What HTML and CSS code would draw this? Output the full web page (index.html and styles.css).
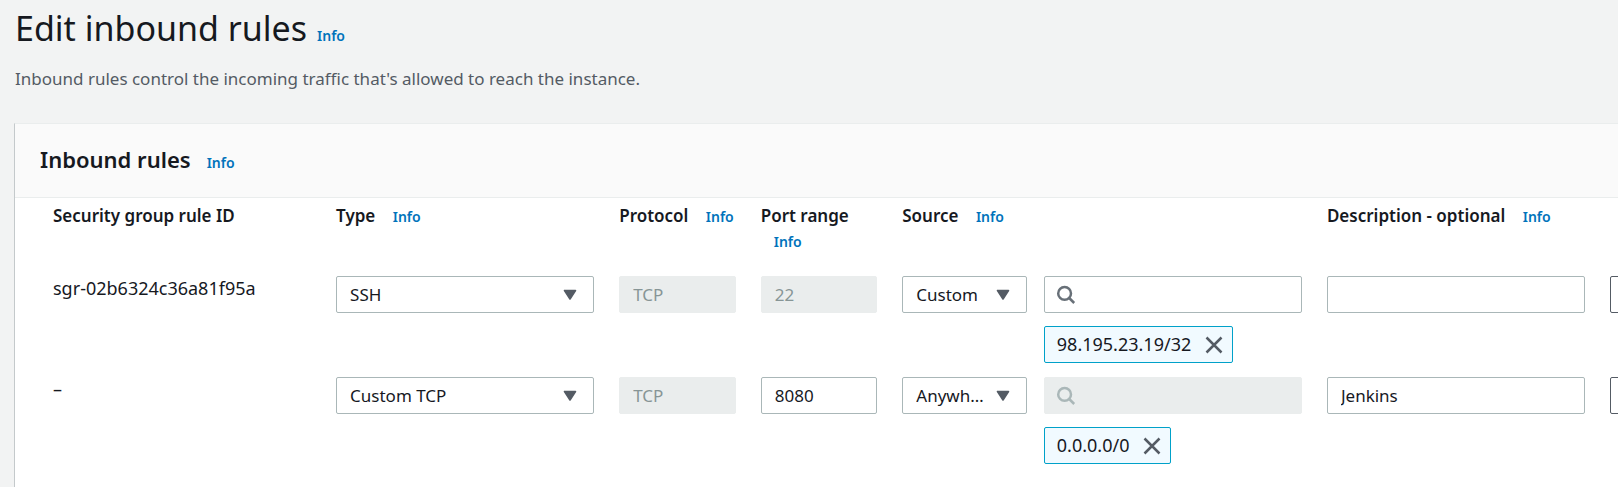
FILE: index.html
```html
<!DOCTYPE html>
<html lang="en">
<head>
<meta charset="utf-8">
<title>Edit inbound rules</title>
<link rel="stylesheet" href="styles.css">
</head>
<body>
<svg class="sprite" aria-hidden="true">
  <symbol id="caret" viewBox="0 0 14 12"><path d="M1.5 1.5h11L7 10z" fill="currentColor" stroke="currentColor" stroke-width="1.6" stroke-linejoin="round"/></symbol>
  <symbol id="search" viewBox="0 0 20 20"><circle cx="8.6" cy="8.4" r="6.4" fill="none" stroke="currentColor" stroke-width="2.5"/><path d="M13.2 13l5 5" fill="none" stroke="currentColor" stroke-width="2.5"/></symbol>
  <symbol id="close" viewBox="0 0 18 18"><path d="M1.5 1.5l15 15M16.5 1.5l-15 15" fill="none" stroke="currentColor" stroke-width="2.5"/></symbol>
</svg>
<main class="page">
  <header class="page-header">
    <div class="title-row">
      <h1 class="page-title">Edit inbound rules</h1>
      <a class="info" href="#">Info</a>
    </div>
    <p class="page-description">Inbound rules control the incoming traffic that's allowed to reach the instance.</p>
  </header>
  <section class="panel">
    <div class="panel-header">
      <h2 class="panel-title">Inbound rules</h2>
      <a class="info" href="#">Info</a>
    </div>
    <table class="rules">
      <thead>
        <tr class="row row-head">
          <th class="span-2" scope="col">Security group rule ID</th>
          <th class="span-2" scope="col">Type <a class="info" href="#">Info</a></th>
          <th scope="col">Protocol <a class="info" href="#">Info</a></th>
          <th scope="col">Port range <a class="info" href="#">Info</a></th>
          <th class="span-3" scope="col">Source <a class="info" href="#">Info</a></th>
          <th class="span-2" scope="col">Description - optional <a class="info" href="#">Info</a></th>
        </tr>
      </thead>
      <tbody>
        <tr class="row">
          <td class="span-2 rule-id">sgr-02b6324c36a81f95a</td>
          <td class="span-2"><div class="field"><select class="control" aria-label="Type"><option>SSH</option></select><svg class="caret" aria-hidden="true"><use href="#caret"/></svg></div></td>
          <td><input class="control" type="text" value="TCP" aria-label="Protocol" disabled></td>
          <td><input class="control" type="text" value="22" aria-label="Port range" disabled></td>
          <td class="source"><div class="field"><select class="control" aria-label="Source type"><option>Custom</option></select><svg class="caret" aria-hidden="true"><use href="#caret"/></svg></div></td>
          <td class="span-2">
            <div class="field"><input class="control control-search" type="text" aria-label="Source"><svg class="search" aria-hidden="true"><use href="#search"/></svg></div>
            <div class="token"><span>98.195.23.19/32</span><button class="token-remove" type="button" aria-label="Remove 98.195.23.19/32"><svg aria-hidden="true"><use href="#close"/></svg></button></div>
          </td>
          <td class="span-2"><input class="control" type="text" aria-label="Description"></td>
          <td><button class="delete" type="button" aria-label="Delete rule"></button></td>
        </tr>
        <tr class="row">
          <td class="span-2 rule-id">–</td>
          <td class="span-2"><div class="field"><select class="control" aria-label="Type"><option>Custom TCP</option></select><svg class="caret" aria-hidden="true"><use href="#caret"/></svg></div></td>
          <td><input class="control" type="text" value="TCP" aria-label="Protocol" disabled></td>
          <td><input class="control" type="text" value="8080" aria-label="Port range"></td>
          <td class="source"><div class="field"><select class="control" aria-label="Source type"><option>Anywh…</option></select><svg class="caret" aria-hidden="true"><use href="#caret"/></svg></div></td>
          <td class="span-2">
            <div class="field"><input class="control control-search" type="text" aria-label="Source" disabled><svg class="search" aria-hidden="true"><use href="#search"/></svg></div>
            <div class="token"><span>0.0.0.0/0</span><button class="token-remove" type="button" aria-label="Remove 0.0.0.0/0"><svg aria-hidden="true"><use href="#close"/></svg></button></div>
          </td>
          <td class="span-2"><input class="control" type="text" value="Jenkins" aria-label="Description"></td>
          <td><button class="delete" type="button" aria-label="Delete rule"></button></td>
        </tr>
      </tbody>
    </table>
  </section>
</main>
</body>
</html>
```
FILE: styles.css
```css
* {
  box-sizing: border-box;
}

body {
  margin: 0;
  background: #f2f3f3;
  color: #16191f;
  font-family: "Noto Sans", "Open Sans", sans-serif;
  font-size: 17px;
  line-height: 25px;
}

.sprite {
  display: none;
}

.page {
  display: flex;
  flex-direction: column;
  min-height: 100vh;
  padding-left: 14px;
  overflow: hidden;
}

.page-header {
  padding: 6px 1px 32px;
}

.title-row,
.panel-header {
  display: flex;
  align-items: baseline;
}

.title-row {
  gap: 10px;
}

.page-title {
  margin: 0;
  font-size: 34px;
  font-weight: 400;
  line-height: 45px;
}

.page-description {
  margin: 15px 0 0;
  color: #545b64;
}

.info {
  color: #0073bb;
  font-size: 14px;
  font-weight: 600;
  text-decoration: none;
}

.panel {
  flex: 1;
  background: #fff;
  border-top: 1px solid #eaeded;
  border-left: 1px solid #c4c9cb;
}

.panel-header {
  gap: 16px;
  padding: 21px 25px 22px;
  background: #fafafa;
  border-bottom: 1px solid #eaeded;
}

.panel-title {
  margin: 0;
  font-size: 22px;
  font-weight: 600;
  line-height: 29px;
}

.rules {
  display: block;
  padding: 5px 0 0 38px;
}

.rules thead,
.rules tbody {
  display: block;
}

.row {
  display: grid;
  grid-template-columns: repeat(11, minmax(0, 1fr)) 8px;
  column-gap: 25px;
  margin-bottom: 14px;
}

.row-head {
  margin-bottom: 22px;
}

.rules th,
.rules td {
  padding: 0;
  font-weight: 400;
  text-align: left;
}

.rules th {
  font-size: 17px;
  font-weight: 600;
}

.rules th .info {
  margin-left: 13px;
}

.rules .span-2 {
  grid-column: span 2;
}

.rules .span-3 {
  grid-column: span 3;
}

.rule-id,
.token {
  font-size: 18px;
}

.source {
  margin-right: -8px;
}

.field {
  position: relative;
}

.control {
  display: block;
  width: 100%;
  height: 37px;
  padding: 0 13px;
  background: #fff;
  border: 1px solid #aab7b8;
  border-radius: 2px;
  color: #16191f;
  font: inherit;
  appearance: none;
}

select.control {
  padding-right: 36px;
}

.control:disabled {
  background: #eaeded;
  border-color: #eaeded;
  color: #879596;
}

.control-search {
  padding-left: 40px;
}

.caret {
  position: absolute;
  top: 13px;
  right: 17px;
  width: 14px;
  height: 12px;
  color: #545b64;
  pointer-events: none;
}

.search {
  position: absolute;
  top: 9px;
  left: 12px;
  width: 20px;
  height: 20px;
  color: #687078;
  pointer-events: none;
}

.control:disabled + .search {
  color: #aab7b8;
}

.token {
  display: inline-flex;
  align-items: center;
  gap: 14px;
  height: 37px;
  margin-top: 13px;
  padding: 0 9px 0 12px;
  background: #f1faff;
  border: 1px solid #00a1c9;
  border-radius: 2px;
  vertical-align: top;
}

.token-remove {
  display: block;
  padding: 0;
  background: none;
  border: 0;
  color: #545b64;
}

.token-remove svg {
  display: block;
  width: 18px;
  height: 18px;
}

.delete {
  display: block;
  width: 117px;
  height: 37px;
  background: #fff;
  border: 1px solid #545b64;
  border-radius: 2px;
}
```
